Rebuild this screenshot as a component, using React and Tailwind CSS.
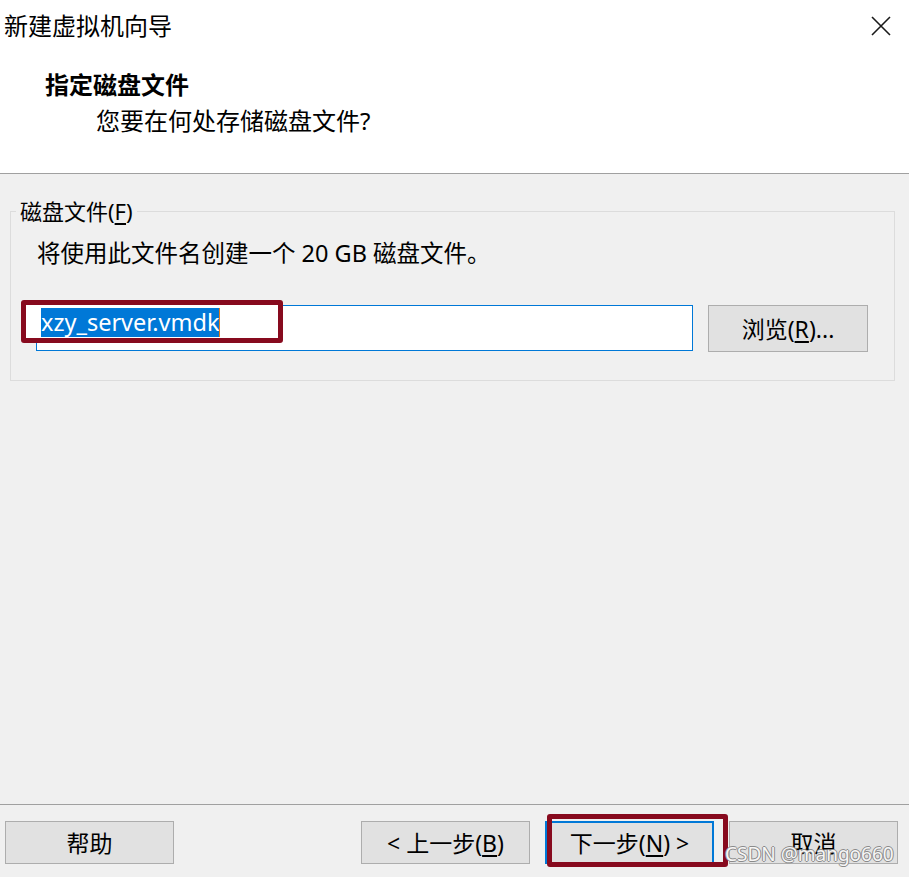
import React from 'react';

const font = "font-['Noto_Sans','Noto_Sans_CJK_SC',sans-serif]";

const WizardButton = ({ children, focused }) => (
    <div
        className={`w-[169px] h-[43px] flex items-center justify-center bg-[#e1e1e1] text-[23px] leading-[30px] text-black ${
            focused ? 'border-2 border-[#0078d7]' : 'border border-[#adadad]'
        }`}
    >
        {children}
    </div>
);

const App = () => {
    return (
        <div className={`relative w-[909px] h-[877px] bg-[#f0f0f0] flex flex-col overflow-hidden text-black ${font}`}>
            {/* Header */}
            <div className="h-[174px] shrink-0 bg-white border-b border-[#a0a0a0]">
                <div className="flex items-start justify-between">
                    <div className="pl-[4px] pt-[10px] text-[24px] leading-[32px]">新建虚拟机向导</div>
                    <svg className="mt-[16px] mr-[18px]" width="20" height="20" viewBox="0 0 20 20">
                        <path d="M1 1 L19 19 M19 1 L1 19" stroke="#1a1a1a" strokeWidth="1.6" fill="none" />
                    </svg>
                </div>
                <div className="pl-[45px] mt-[27px] text-[24px] leading-[32px] font-bold">指定磁盘文件</div>
                <div className="pl-[96px] mt-[4px] text-[24px] leading-[32px]">您要在何处存储磁盘文件?</div>
            </div>

            {/* Body */}
            <div className="flex-1 pt-[25px]">
                <fieldset className="ml-[10px] mr-[14px] border border-[#dcdcdc] pl-[25px] pr-[26px] pt-[15px] pb-[28px]">
                    <legend className="ml-[-20px] px-[4px] text-[22px] leading-[24px]">
                        磁盘文件(<span className="underline underline-offset-[3px]">F</span>)
                    </legend>
                    <div className="ml-[1px] text-[23.5px] leading-[30px]">将使用此文件名创建一个 20 GB 磁盘文件。</div>
                    <div className="relative mt-[37px] flex items-start gap-[15px]">
                        <div className="w-[657px] h-[46px] border border-[#0078d7] bg-white pl-[4px] pt-[2px]">
                            <span className="relative z-20 inline-flex items-center">
                                <span className="bg-[#0078d7] text-white text-[23.5px] leading-[29px]">xzy_server.vmdk</span>
                                <span className="inline-block w-[1px] h-[29px] bg-[#e07b1f]"></span>
                            </span>
                        </div>
                        <div className="w-[160px] h-[47px] flex items-center justify-center bg-[#e1e1e1] border border-[#adadad] text-[23px] leading-[30px]">
                            浏览(<span className="underline underline-offset-[3px]">R</span>)...
                        </div>
                        <div className="absolute z-10 left-[-15px] top-[-5px] w-[262px] h-[43px] bg-white border-[5px] border-[#870a1e] rounded-[3px]"></div>
                    </div>
                </fieldset>
            </div>

            {/* Footer */}
            <div className="h-[73px] shrink-0 border-t border-[#a0a0a0] pt-[16px] pl-[5px] pr-[11px] flex items-start">
                <WizardButton>帮助</WizardButton>
                <div className="ml-auto flex gap-[15px]">
                    <WizardButton>
                        &lt; 上一步(<span className="underline underline-offset-[3px]">B</span>)
                    </WizardButton>
                    <div className="relative">
                        <WizardButton focused>
                            下一步(<span className="underline underline-offset-[3px]">N</span>) &gt;
                        </WizardButton>
                        <div className="absolute left-[2px] top-[-7px] w-[181px] h-[53px] border-[5px] border-[#870a1e] rounded-[3px]"></div>
                    </div>
                    <WizardButton>取消</WizardButton>
                </div>
            </div>

            {/* watermark */}
            <div className="absolute left-[725px] top-[843px] text-[19px] leading-[22px] text-[#f6f6f6] [text-shadow:1px_0_0_#8a8a8a,-1px_0_0_#8a8a8a,0_1px_0_#8a8a8a,0_-1px_0_#8a8a8a]">
                CSDN @mango660
            </div>
        </div>
    );
};

export default App;
